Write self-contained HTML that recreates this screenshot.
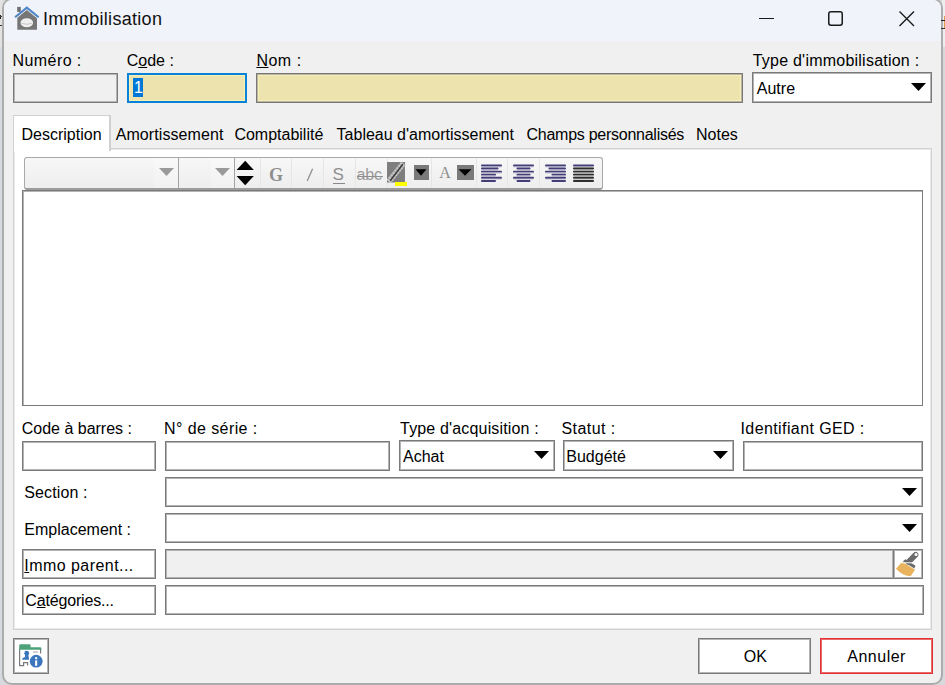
<!DOCTYPE html><html><head><meta charset="utf-8"><style>
html,body{margin:0;padding:0;}
body{width:945px;height:685px;position:relative;overflow:hidden;background:#d9d9d9;font-family:"Liberation Sans",sans-serif;}
.t{position:absolute;white-space:nowrap;}
u{text-decoration:underline;text-decoration-thickness:1px;text-underline-offset:1px;}
</style></head><body>

<div style="position:absolute;left:0px;top:0px;width:945px;height:685px;box-sizing:border-box;background:#d9d9d9;"></div>
<div style="position:absolute;left:0px;top:0px;width:3px;height:47px;box-sizing:border-box;background:#e2e2e2;"></div>
<div style="position:absolute;left:0px;top:47px;width:3px;height:638px;box-sizing:border-box;background:#d6dadf;"></div>
<div style="position:absolute;left:0px;top:15px;width:1px;height:4px;box-sizing:border-box;background:#222;"></div>
<div style="position:absolute;left:0px;top:16px;width:3px;height:1px;box-sizing:border-box;background:#444;"></div>
<div style="position:absolute;left:0px;top:25px;width:3px;height:1px;box-sizing:border-box;background:#333;"></div>
<div style="position:absolute;left:942px;top:0px;width:3px;height:47px;box-sizing:border-box;background:#eceef2;"></div>
<div style="position:absolute;left:942px;top:47px;width:3px;height:638px;box-sizing:border-box;background:#d6dadf;"></div>
<div style="position:absolute;left:2px;top:-2px;width:941px;height:687px;box-sizing:border-box;border:2px solid #acacac;border-radius:10px;background:#f0f0f0;overflow:hidden;"><div style="position:absolute;left:0;top:0;width:100%;height:41px;background:#f0f3f9;"></div></div>
<div style="position:absolute;left:944px;top:16px;width:1px;height:13px;box-sizing:border-box;background:#e39a4a;"></div>
<div style="position:absolute;left:941px;top:20px;width:4px;height:1px;box-sizing:border-box;background:#222;"></div>
<div style="position:absolute;left:941px;top:28px;width:4px;height:1px;box-sizing:border-box;background:#333;"></div>
<svg style="position:absolute;left:12px;top:3px" width="30" height="30" viewBox="0 0 30 30">
<rect x="5.2" y="3.9" width="3.6" height="5" fill="#707070"/>
<polygon points="5.3,13 14.8,5.2 25,13.2 25,26.8 5.3,26.8" fill="#767676"/>
<polyline points="3.8,15.2 14.8,6.3 25.9,15.2" fill="none" stroke="#e6ebf3" stroke-width="1.2"/>
<polyline points="3.6,13.7 14.8,4.7 26.1,13.7" fill="none" stroke="#5087c7" stroke-width="2.1" stroke-linecap="round"/>
<ellipse cx="14.8" cy="19.7" rx="6.3" ry="4.5" fill="#efefef"/>
<path d="M9.5 20.3 Q14.8 22.3 20.1 20.3" stroke="#c4c4c4" stroke-width="0.9" fill="none"/>
</svg>
<div class="t" style="left:43px;top:9.76px;font-size:18px;line-height:18px;color:#111;letter-spacing:0.3px;">Immobilisation</div>
<div style="position:absolute;left:759px;top:18px;width:15px;height:1px;box-sizing:border-box;background:#1a1a1a;"></div>
<svg style="position:absolute;left:826px;top:9px" width="19" height="19"><rect x="2.75" y="2.75" width="13.5" height="13.5" rx="2.2" fill="none" stroke="#1a1a1a" stroke-width="1.5"/></svg>
<svg style="position:absolute;left:898px;top:10px" width="18" height="18"><path d="M1.5 1.5 L16 16 M16 1.5 L1.5 16" stroke="#1a1a1a" stroke-width="1.4"/></svg>
<div class="t" style="left:12.5px;top:53.46px;font-size:16px;line-height:16px;color:#000;letter-spacing:0.43px;">Numéro :</div>
<div style="position:absolute;left:13px;top:73px;width:105px;height:30px;box-sizing:border-box;border:1px solid #7a7a7a;box-shadow:inset 0 0 0 1px #b4b4b4;background:#f0f0f0;"></div>
<div class="t" style="left:126.7px;top:53.46px;font-size:16px;line-height:16px;color:#000;">C<u>o</u>de :</div>
<div style="position:absolute;left:127px;top:73px;width:120px;height:30px;box-sizing:border-box;border:2px solid #0a82d8;box-shadow:inset 0 0 0 1px #f8f0b9;background:#ede3ae;"></div>
<div style="position:absolute;left:133px;top:78px;width:10px;height:19px;box-sizing:border-box;background:#0078d7;"></div>
<div class="t" style="left:134px;top:80.46px;font-size:16px;line-height:16px;color:#fff;">1</div>
<div class="t" style="left:256.4px;top:53.46px;font-size:16px;line-height:16px;color:#000;letter-spacing:0.5px;"><u>N</u>om :</div>
<div style="position:absolute;left:256px;top:73px;width:487px;height:30px;box-sizing:border-box;border:1px solid #787878;box-shadow:inset 0 0 0 1px #b8b39c, inset 0 0 0 2px #f8f0b9;background:#ede3ae;"></div>
<div class="t" style="left:752.7px;top:53.46px;font-size:16px;line-height:16px;color:#000;letter-spacing:0.23px;">Type d'immobilisation :</div>
<div style="position:absolute;left:752px;top:72px;width:180px;height:31px;box-sizing:border-box;border:1px solid #7a7a7a;box-shadow:inset 0 0 0 1px #b4b4b4;background:#fff;"></div>
<svg style="position:absolute;left:911px;top:83.0px" width="15" height="8"><polygon points="0,0 15,0 7.5,8" fill="#000"/></svg>
<div class="t" style="left:756.8px;top:80.66px;font-size:16px;line-height:16px;color:#000;">Autre</div>
<div style="position:absolute;left:13px;top:148px;width:919px;height:482px;box-sizing:border-box;background:#fff;border:1px solid #d2d2d4;box-shadow:inset 0 0 0 1px #e9eaed;"></div>
<div style="position:absolute;left:13px;top:115px;width:98px;height:36px;box-sizing:border-box;background:#fff;border:1px solid #d0d0d0;border-right:2px solid #d0d0d0;border-bottom:none;"></div>
<div style="position:absolute;left:14px;top:148px;width:95px;height:4px;box-sizing:border-box;background:#fff;"></div>
<div class="t" style="left:21.5px;top:126.96px;font-size:16px;line-height:16px;color:#000;">Description</div>
<div class="t" style="left:115.7px;top:126.96px;font-size:16px;line-height:16px;color:#000;letter-spacing:0.08px;">Amortissement</div>
<div class="t" style="left:234.4px;top:126.96px;font-size:16px;line-height:16px;color:#000;">Comptabilité</div>
<div class="t" style="left:336.6px;top:126.96px;font-size:16px;line-height:16px;color:#000;">Tableau d'amortissement</div>
<div class="t" style="left:526.5px;top:126.96px;font-size:16px;line-height:16px;color:#000;letter-spacing:-0.26px;">Champs personnalisés</div>
<div class="t" style="left:696px;top:126.96px;font-size:16px;line-height:16px;color:#000;">Notes</div>
<div style="position:absolute;left:22px;top:190px;width:901px;height:216px;box-sizing:border-box;border:1px solid #7a7a7a;box-shadow:inset 1px 1px 0 0 #b4b4b4;background:#fff;"></div>
<div style="position:absolute;left:24px;top:157px;width:579px;height:33px;box-sizing:border-box;background:linear-gradient(#f7f7f7,#eeeeee);border:1px solid #a9a9a9;border-bottom:2px solid #9c9c9c;border-radius:3px;"></div>
<div style="position:absolute;left:154px;top:158px;width:24px;height:30px;box-sizing:border-box;background:linear-gradient(#f9f9f9,#f1f1f1);"></div>
<div style="position:absolute;left:211px;top:158px;width:23px;height:30px;box-sizing:border-box;background:linear-gradient(#f9f9f9,#f1f1f1);"></div>
<div style="position:absolute;left:178px;top:158px;width:1px;height:30px;box-sizing:border-box;background:#a3a3a3;"></div>
<div style="position:absolute;left:234px;top:158px;width:1px;height:30px;box-sizing:border-box;background:#a3a3a3;"></div>
<svg style="position:absolute;left:159px;top:168px" width="15" height="8"><polygon points="0,0 15,0 7.5,8" fill="#9a9a9a"/></svg>
<svg style="position:absolute;left:215px;top:168px" width="15" height="8"><polygon points="0,0 15,0 7.5,8" fill="#9a9a9a"/></svg>
<svg style="position:absolute;left:236px;top:160px" width="19" height="26"><polygon points="0.6,10 17.8,10 9.2,0.8" fill="#000"/><polygon points="0.6,16 17.8,16 9.2,25.2" fill="#000"/></svg>
<div style="position:absolute;left:260px;top:158px;width:1px;height:30px;box-sizing:border-box;background:#e6e6e6;"></div>
<div style="position:absolute;left:291px;top:158px;width:1px;height:30px;box-sizing:border-box;background:#e6e6e6;"></div>
<div style="position:absolute;left:323px;top:158px;width:1px;height:30px;box-sizing:border-box;background:#e6e6e6;"></div>
<div style="position:absolute;left:355px;top:158px;width:1px;height:30px;box-sizing:border-box;background:#e6e6e6;"></div>
<div style="position:absolute;left:387px;top:158px;width:1px;height:30px;box-sizing:border-box;background:#e6e6e6;"></div>
<div style="position:absolute;left:431px;top:158px;width:1px;height:30px;box-sizing:border-box;background:#e6e6e6;"></div>
<div style="position:absolute;left:476px;top:158px;width:1px;height:30px;box-sizing:border-box;background:#e6e6e6;"></div>
<div style="position:absolute;left:507px;top:158px;width:1px;height:30px;box-sizing:border-box;background:#e6e6e6;"></div>
<div style="position:absolute;left:539px;top:158px;width:1px;height:30px;box-sizing:border-box;background:#e6e6e6;"></div>
<div class="t" style="left:269px;top:164.5px;font:bold 18px/20px 'Liberation Serif',serif;color:#8d8d8d;">G</div>
<svg style="position:absolute;left:305px;top:168px" width="9" height="14"><path d="M7.6 0.8 L2.2 13" stroke="#909090" stroke-width="1.3"/></svg>
<div class="t" style="left:332.5px;top:166px;font:17px/17px 'Liberation Sans',sans-serif;color:#8f8f8f;">S</div>
<div style="position:absolute;left:333px;top:183px;width:12px;height:1px;box-sizing:border-box;background:#8a8a8a;"></div>
<div class="t" style="left:356.5px;top:166px;font:16px/18px 'Liberation Sans',sans-serif;color:#9a9a9a;letter-spacing:-0.2px;">abc</div>
<div style="position:absolute;left:357px;top:176px;width:26px;height:1px;box-sizing:border-box;background:#8f8f8f;"></div>
<svg style="position:absolute;left:387px;top:162px" width="21" height="24">
<rect x="0" y="0" width="18" height="20.5" fill="#7e7e7e"/>
<path d="M1.8 19.5 L16.5 1.2" stroke="#acacac" stroke-width="5.5"/>
<path d="M1.8 19.5 L16.5 1.2" stroke="#cfcfcf" stroke-width="5.5" stroke-dasharray="1.2 1.8"/>
<path d="M3.2 18.8 L15.8 2.2" stroke="#3a3a3a" stroke-width="1.5"/>
<rect x="8" y="20" width="12" height="4" fill="#ffff00"/>
</svg>
<svg style="position:absolute;left:414px;top:165px" width="15" height="15"><rect width="15" height="15" fill="#7a7a7a"/><polygon points="1.5,4.3 12.5,4.3 7.0,10.8" fill="#000"/></svg>
<svg style="position:absolute;left:457px;top:165px" width="17" height="15"><rect width="17" height="15" fill="#7a7a7a"/><polygon points="1.5,4.3 14.5,4.3 8.0,10.8" fill="#000"/></svg>
<div class="t" style="left:439.3px;top:163.5px;font:16px/17px 'Liberation Serif',serif;color:#8d8d8d;">A</div>
<svg style="position:absolute;left:481.3px;top:164px" width="22" height="18"><rect x="0" y="0.4999999999999886" width="21" height="1.9" rx="0.9" fill="#433e78"/><rect x="0.5" y="2.399999999999989" width="20" height="1.1" fill="#bdbad0" opacity="0.6"/><rect x="0" y="3.600000000000011" width="17.5" height="1.9" rx="0.9" fill="#433e78"/><rect x="0.5" y="5.5000000000000115" width="16.5" height="1.1" fill="#bdbad0" opacity="0.6"/><rect x="0" y="6.7000000000000055" width="21" height="1.9" rx="0.9" fill="#433e78"/><rect x="0.5" y="8.600000000000005" width="20" height="1.1" fill="#bdbad0" opacity="0.6"/><rect x="0" y="9.700000000000006" width="15" height="1.9" rx="0.9" fill="#433e78"/><rect x="0.5" y="11.600000000000005" width="14" height="1.1" fill="#bdbad0" opacity="0.6"/><rect x="0" y="12.8" width="21" height="1.9" rx="0.9" fill="#433e78"/><rect x="0.5" y="14.7" width="20" height="1.1" fill="#bdbad0" opacity="0.6"/><rect x="0" y="15.99999999999999" width="15" height="1.9" rx="0.9" fill="#433e78"/></svg>
<svg style="position:absolute;left:512.5px;top:164px" width="22" height="18"><rect x="0" y="0.4999999999999886" width="21" height="1.9" rx="0.9" fill="#433e78"/><rect x="0.5" y="2.399999999999989" width="20" height="1.1" fill="#bdbad0" opacity="0.6"/><rect x="3.5" y="3.600000000000011" width="14.0" height="1.9" rx="0.9" fill="#433e78"/><rect x="4.0" y="5.5000000000000115" width="13.0" height="1.1" fill="#bdbad0" opacity="0.6"/><rect x="0" y="6.7000000000000055" width="21" height="1.9" rx="0.9" fill="#433e78"/><rect x="0.5" y="8.600000000000005" width="20" height="1.1" fill="#bdbad0" opacity="0.6"/><rect x="3.5" y="9.700000000000006" width="14.0" height="1.9" rx="0.9" fill="#433e78"/><rect x="4.0" y="11.600000000000005" width="13.0" height="1.1" fill="#bdbad0" opacity="0.6"/><rect x="0" y="12.8" width="21" height="1.9" rx="0.9" fill="#433e78"/><rect x="0.5" y="14.7" width="20" height="1.1" fill="#bdbad0" opacity="0.6"/><rect x="3.5" y="15.99999999999999" width="14.0" height="1.9" rx="0.9" fill="#433e78"/></svg>
<svg style="position:absolute;left:544.5px;top:164px" width="22" height="18"><rect x="0" y="0.4999999999999886" width="21" height="1.9" rx="0.9" fill="#433e78"/><rect x="0.5" y="2.399999999999989" width="20" height="1.1" fill="#bdbad0" opacity="0.6"/><rect x="3.5" y="3.600000000000011" width="17.5" height="1.9" rx="0.9" fill="#433e78"/><rect x="4.0" y="5.5000000000000115" width="16.5" height="1.1" fill="#bdbad0" opacity="0.6"/><rect x="0" y="6.7000000000000055" width="21" height="1.9" rx="0.9" fill="#433e78"/><rect x="0.5" y="8.600000000000005" width="20" height="1.1" fill="#bdbad0" opacity="0.6"/><rect x="6.5" y="9.700000000000006" width="14.5" height="1.9" rx="0.9" fill="#433e78"/><rect x="7.0" y="11.600000000000005" width="13.5" height="1.1" fill="#bdbad0" opacity="0.6"/><rect x="0" y="12.8" width="21" height="1.9" rx="0.9" fill="#433e78"/><rect x="0.5" y="14.7" width="20" height="1.1" fill="#bdbad0" opacity="0.6"/><rect x="6.5" y="15.99999999999999" width="14.5" height="1.9" rx="0.9" fill="#433e78"/></svg>
<svg style="position:absolute;left:572.7px;top:164px" width="22" height="18"><rect x="0" y="0.4999999999999886" width="21" height="1.9" rx="0.9" fill="#433e78"/><rect x="0.5" y="2.399999999999989" width="20" height="1.1" fill="#a9a9a9" opacity="0.6"/><rect x="0" y="3.600000000000011" width="21" height="1.9" rx="0.9" fill="#2e2e2e"/><rect x="0.5" y="5.5000000000000115" width="20" height="1.1" fill="#a9a9a9" opacity="0.6"/><rect x="0" y="6.7000000000000055" width="21" height="1.9" rx="0.9" fill="#2e2e2e"/><rect x="0.5" y="8.600000000000005" width="20" height="1.1" fill="#a9a9a9" opacity="0.6"/><rect x="0" y="9.700000000000006" width="21" height="1.9" rx="0.9" fill="#2e2e2e"/><rect x="0.5" y="11.600000000000005" width="20" height="1.1" fill="#a9a9a9" opacity="0.6"/><rect x="0" y="12.8" width="21" height="1.9" rx="0.9" fill="#2e2e2e"/><rect x="0.5" y="14.7" width="20" height="1.1" fill="#a9a9a9" opacity="0.6"/><rect x="0" y="15.99999999999999" width="21" height="1.9" rx="0.9" fill="#2e2e2e"/></svg>
<div class="t" style="left:21.7px;top:421.16px;font-size:16px;line-height:16px;color:#000;">Code à barres :</div>
<div style="position:absolute;left:22px;top:441px;width:134px;height:30px;box-sizing:border-box;border:1px solid #7a7a7a;box-shadow:inset 0 0 0 1px #b4b4b4;background:#fff;"></div>
<div class="t" style="left:164px;top:421.16px;font-size:16px;line-height:16px;color:#000;letter-spacing:0.42px;">N° de série :</div>
<div style="position:absolute;left:165px;top:441px;width:225px;height:30px;box-sizing:border-box;border:1px solid #7a7a7a;box-shadow:inset 0 0 0 1px #b4b4b4;background:#fff;"></div>
<div class="t" style="left:400.1px;top:421.16px;font-size:16px;line-height:16px;color:#000;letter-spacing:0.16px;">Type d'acquisition :</div>
<div style="position:absolute;left:399px;top:440px;width:156px;height:31px;box-sizing:border-box;border:1px solid #7a7a7a;box-shadow:inset 0 0 0 1px #b4b4b4;background:#fff;"></div>
<svg style="position:absolute;left:534px;top:451.0px" width="15" height="8"><polygon points="0,0 15,0 7.5,8" fill="#000"/></svg>
<div class="t" style="left:403px;top:449.36px;font-size:16px;line-height:16px;color:#000;">Achat</div>
<div class="t" style="left:561.5px;top:421.16px;font-size:16px;line-height:16px;color:#000;letter-spacing:0.43px;">Statut :</div>
<div style="position:absolute;left:563px;top:440px;width:171px;height:31px;box-sizing:border-box;border:1px solid #7a7a7a;box-shadow:inset 0 0 0 1px #b4b4b4;background:#fff;"></div>
<svg style="position:absolute;left:713px;top:451.0px" width="15" height="8"><polygon points="0,0 15,0 7.5,8" fill="#000"/></svg>
<div class="t" style="left:566.3px;top:449.36px;font-size:16px;line-height:16px;color:#000;">Budgété</div>
<div class="t" style="left:740.5px;top:421.16px;font-size:16px;line-height:16px;color:#000;letter-spacing:0.4px;">Identifiant GED :</div>
<div style="position:absolute;left:743px;top:441px;width:180px;height:30px;box-sizing:border-box;border:1px solid #7a7a7a;box-shadow:inset 0 0 0 1px #b4b4b4;background:#fff;"></div>
<div class="t" style="left:24.3px;top:485.46px;font-size:16px;line-height:16px;color:#000;letter-spacing:0.12px;">Section :</div>
<div style="position:absolute;left:165px;top:477px;width:758px;height:30px;box-sizing:border-box;border:1px solid #7a7a7a;box-shadow:inset 0 0 0 1px #b4b4b4;background:#fff;"></div>
<svg style="position:absolute;left:902px;top:487.5px" width="15" height="8"><polygon points="0,0 15,0 7.5,8" fill="#000"/></svg>
<div class="t" style="left:24.3px;top:521.56px;font-size:16px;line-height:16px;color:#000;">Emplacement :</div>
<div style="position:absolute;left:165px;top:513px;width:758px;height:30px;box-sizing:border-box;border:1px solid #7a7a7a;box-shadow:inset 0 0 0 1px #b4b4b4;background:#fff;"></div>
<svg style="position:absolute;left:902px;top:523.5px" width="15" height="8"><polygon points="0,0 15,0 7.5,8" fill="#000"/></svg>
<div style="position:absolute;left:22px;top:549px;width:134px;height:30px;box-sizing:border-box;border:1px solid #7a7a7a;box-shadow:inset 0 0 0 1px #b4b4b4;background:#fff;"></div>
<div class="t" style="left:24.3px;top:557.76px;font-size:16px;line-height:16px;color:#000;letter-spacing:0.45px;"><u>I</u>mmo parent...</div>
<div style="position:absolute;left:165px;top:549px;width:729px;height:30px;box-sizing:border-box;border:1px solid #7a7a7a;box-shadow:inset 0 0 0 1px #b4b4b4;background:#f0f0f0;"></div>
<div style="position:absolute;left:893px;top:549px;width:30px;height:30px;box-sizing:border-box;border:1px solid #7a7a7a;box-shadow:inset 0 0 0 1px #b4b4b4;background:#fff;"></div>
<svg style="position:absolute;left:893px;top:549px" width="30" height="30" viewBox="0 0 30 30">
<path d="M3 19.8 L9.2 12.8 L22 20.8 L18 26.8 Q11 28.2 3 19.8 Z" fill="#e8b35c"/>
<path d="M9.8 12.2 L12.5 10.2 L22.5 16.8 L21.3 19.6 Z" fill="#6b6b6b"/>
<path d="M15.5 13 L22.6 5.8" stroke="#6b6b6b" stroke-width="5.6" stroke-linecap="round"/>
<circle cx="23" cy="5.6" r="1.5" fill="#fff"/>
<path d="M7.5 13.8 L21 13.8" stroke="#f4f4f4" stroke-width="1" transform="rotate(0)"/>
</svg>
<div style="position:absolute;left:22px;top:585px;width:134px;height:30px;box-sizing:border-box;border:1px solid #7a7a7a;box-shadow:inset 0 0 0 1px #b4b4b4;background:#fff;"></div>
<div class="t" style="left:25.3px;top:593.16px;font-size:16px;line-height:16px;color:#000;letter-spacing:-0.17px;">C<u>a</u>tégories...</div>
<div style="position:absolute;left:165px;top:585px;width:759px;height:30px;box-sizing:border-box;border:1px solid #7a7a7a;box-shadow:inset 0 0 0 1px #b4b4b4;background:#fff;"></div>
<div style="position:absolute;left:13px;top:638px;width:36px;height:36px;box-sizing:border-box;border:1px solid #7a7a7a;box-shadow:inset 0 0 0 1px #b4b4b4;background:#fff;"></div>
<svg style="position:absolute;left:12px;top:637px" width="38" height="38" viewBox="0 0 38 38">
<path d="M7.6 12 V28.6 H11.6 V25.6 H15.6 V28.6" fill="none" stroke="#7a7a7a" stroke-width="1.2"/>
<path d="M28.6 12 V16.5" fill="none" stroke="#7a7a7a" stroke-width="1.2"/>
<path d="M7.2 12.8 V8.6 Q7.2 7.2 8.6 7.2 H17.4 Q18.6 7.2 18.6 8.4 V10.2 H28.2 Q29.4 10.2 29.4 11.4 V12.8 Z" fill="#4ea27a"/>
<rect x="21" y="14.5" width="4.8" height="1" fill="#a0a0a0"/>
<circle cx="14.7" cy="16.2" r="2.4" fill="#3b76bd"/>
<path d="M13.2 17.5 L16.4 17.5 L16.6 20.3 L17 20.5 L17 22.7 L10.3 22.7 L10.3 21.8 Q10.6 20.5 12.8 20.3 Z" fill="#3b76bd"/>
<circle cx="24.2" cy="24.2" r="6.9" fill="#ffffff"/>
<circle cx="24.2" cy="24.2" r="6.4" fill="#3b76bd"/>
<rect x="23.1" y="20.2" width="2.1" height="2" fill="#fff"/>
<rect x="23.1" y="23.4" width="2.1" height="5.4" fill="#fff"/>
</svg>
<div style="position:absolute;left:698px;top:638px;width:113px;height:36px;box-sizing:border-box;border:1px solid #7a7a7a;box-shadow:inset 0 0 0 1px #b4b4b4;background:#fff;"></div>
<div class="t" style="left:743.8px;top:649.36px;font-size:16px;line-height:16px;color:#000;">OK</div>
<div style="position:absolute;left:820px;top:638px;width:113px;height:36px;box-sizing:border-box;border:1px solid #e03434;box-shadow:inset 0 0 0 1px #e96b6b;background:#fff;"></div>
<div class="t" style="left:847.3px;top:649.16px;font-size:16px;line-height:16px;color:#000;letter-spacing:0.5px;">Annuler</div>
</body></html>
